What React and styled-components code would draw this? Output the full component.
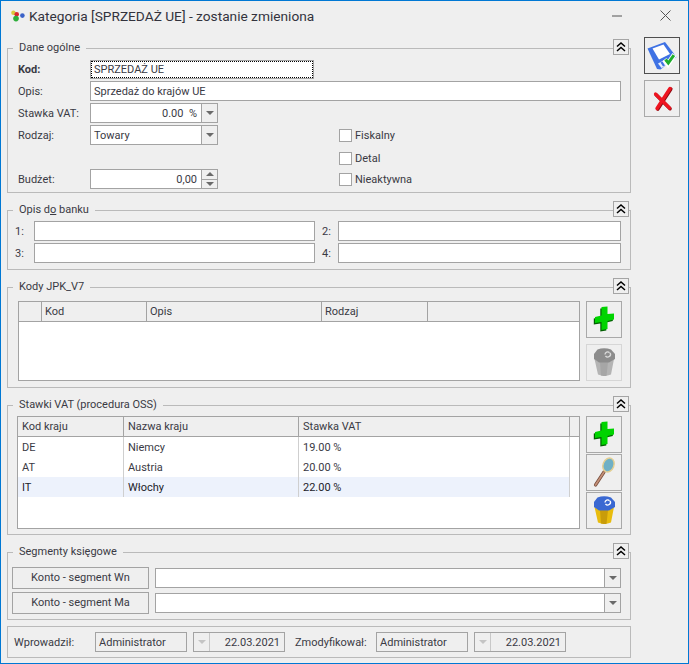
import React from 'react';
import styled, { createGlobalStyle } from 'styled-components';

const GlobalStyle = createGlobalStyle`
  html, body {
    margin: 0;
    padding: 0;
    background: #efefef;
  }
  * { box-sizing: border-box; }
`;

const Window = styled.div`
  width: 689px;
  height: 664px;
  border: 1px solid #0078d4;
  background: #efefef;
  color: #3a3a44;
  font-family: Roboto, "Open Sans", sans-serif;
  font-size: 11px;
  overflow: hidden;
`;

const TitleBar = styled.div`
  height: 36px;
  display: flex;
  align-items: center;
  padding-left: 9px;
  padding-right: 17px;
  padding-bottom: 7px;
`;

const Title = styled.div`
  margin-left: 4px;
  font-size: 13.7px;
  color: #33333d;
  flex: 1;
`;

const TitleButtons = styled.div`
  display: flex;
  align-items: center;
  gap: 38px;
`;

const Main = styled.div`
  display: flex;
  padding-left: 6px;
  gap: 13px;
`;

const LeftColumn = styled.div`
  width: 624px;
  padding-top: 11px;
  display: flex;
  flex-direction: column;
`;

const RightColumn = styled.div`
  width: 36px;
  display: flex;
  flex-direction: column;
  gap: 6px;
`;

const Section = styled.section`
  position: relative;
  border: 1px solid #bababa;
  margin-bottom: ${p => p.$gap ?? 17}px;
  padding: ${p => p.$pad};
`;

const Legend = styled.div`
  position: absolute;
  top: -9px;
  left: 5px;
  padding: 0 6px;
  line-height: 16px;
  background: #efefef;
`;

const Toggle = styled.div`
  position: absolute;
  top: -10px;
  right: 1px;
  width: 16px;
  height: 16px;
  border: 1px solid #a5a5a5;
  background: #efefef;
  display: flex;
  align-items: center;
  justify-content: center;
`;

const Row = styled.div`
  display: flex;
  align-items: center;
  margin-bottom: ${p => p.$mb ?? 2}px;
  height: ${p => p.$h ?? 20}px;
`;

const Label = styled.div`
  width: ${p => p.$w}px;
  flex: none;
  font-weight: ${p => (p.$bold ? 700 : 400)};
  white-space: nowrap;
`;

const Field = styled.div`
  flex: ${p => (p.$w ? 'none' : 1)};
  width: ${p => (p.$w ? `${p.$w}px` : 'auto')};
  height: ${p => p.$h ?? 20}px;
  border: 1px solid #a3a3a3;
  background: ${p => (p.$off ? '#efefef' : '#fff')};
  display: flex;
  align-items: center;
  line-height: 16px;
  white-space: nowrap;
  outline: ${p => (p.$focus ? '1px dotted #000' : 'none')};
  outline-offset: -2px;
`;

const FieldText = styled.div`
  flex: 1;
  padding: 1px 4px 0 3px;
  text-align: ${p => (p.$right ? 'right' : 'left')};
  white-space: pre;
`;

const Arrow = styled.div`
  flex: none;
  width: 16px;
  height: 100%;
  border-left: 1px solid ${p => (p.$off ? '#c8c8c8' : '#a3a3a3')};
  background: #efefef;
  display: flex;
  align-items: center;
  justify-content: center;
  order: ${p => (p.$first ? -1 : 0)};
  ${p => p.$first && `
    border-left: 0;
    border-right: 1px solid #c8c8c8;
  `}
  &::after {
    content: '';
    border-left: 4px solid transparent;
    border-right: 4px solid transparent;
    border-top: 4px solid ${p => (p.$off ? '#c4c4c4' : '#6a6a6a')};
  }
`;

const Spinner = styled.div`
  flex: none;
  width: 16px;
  height: 100%;
  border-left: 1px solid #a3a3a3;
  background: #efefef;
  display: flex;
  flex-direction: column;
`;

const SpinPart = styled.div`
  flex: 1;
  display: flex;
  align-items: center;
  justify-content: center;
  border-top: ${p => (p.$down ? '1px solid #a3a3a3' : '0')};
  &::after {
    content: '';
    border-left: 4px solid transparent;
    border-right: 4px solid transparent;
    ${p => (p.$down ? 'border-top' : 'border-bottom')}: 4px solid #6a6a6a;
  }
`;

const CheckWrap = styled.div`
  margin-left: ${p => p.$ml}px;
  display: flex;
  align-items: center;
  gap: 3px;
  position: relative;
  top: ${p => p.$shift ?? 0}px;
`;

const Box = styled.div`
  width: 13px;
  height: 13px;
  border: 1px solid #a3a3a3;
  background: #fff;
`;

const Spacer = styled.div`
  width: ${p => p.$w}px;
  flex: none;
`;

const GridArea = styled.div`
  display: flex;
  gap: 6px;
`;

const Grid = styled.div`
  width: ${p => p.$w}px;
  height: ${p => p.$h}px;
  flex: none;
  border: 1px solid #a3a3a3;
  background: #fff;
`;

const GridRow = styled.div`
  display: grid;
  grid-template-columns: ${p => p.$cols};
  height: 20px;
  ${p => p.$head && `
    background: #efefef;
    border-bottom: 1px solid #a3a3a3;
  `}
`;

const Cell = styled.div`
  padding-left: ${p => p.$pl ?? 4}px;
  line-height: ${p => (p.$head ? 20 : 22)}px;
  border-right: 1px solid ${p => (p.$head ? '#a3a3a3' : '#cfcfcf')};
  background: ${p => (p.$active ? '#edf2fc' : 'transparent')};
  color: ${p => (p.$active ? '#22222a' : 'inherit')};
  white-space: nowrap;
  overflow: hidden;
`;

const ToolColumn = styled.div`
  width: 36px;
  flex: none;
  display: flex;
  flex-direction: column;
  gap: ${p => p.$gap}px;
`;

const IconButton = styled.div`
  width: 36px;
  height: 37px;
  border: 1px solid ${p => (p.$dark ? '#4f4f4f' : p.$off ? '#d6d6d6' : '#a9a9a9')};
  background: #efefef;
  display: flex;
  align-items: center;
  justify-content: center;
  flex: none;
`;

const SegmentRow = styled.div`
  display: flex;
  align-items: center;
  gap: 6px;
  height: 22px;
  margin-bottom: ${p => p.$mb ?? 0}px;
`;

const SegmentButton = styled.div`
  width: 137px;
  height: 22px;
  flex: none;
  border: 1px solid #a3a3a3;
  background: #efefef;
  text-align: center;
  line-height: 19px;
`;

const Footer = styled.div`
  border: 1px solid #bababa;
  height: 32px;
  display: flex;
  align-items: center;
  padding-left: 6px;
`;

const SmallX = () => (
  <svg width="11" height="11" viewBox="0 0 11 11">
    <path d="M.5.5l10 10M10.5.5l-10 10" stroke="#555" strokeWidth="1" fill="none" />
  </svg>
);

const AppIcon = () => (
  <svg width="15" height="12" viewBox="0 0 15 12">
    <circle cx="3.4" cy="2.7" r="2.2" fill="#d9c93c" />
    <circle cx="6.7" cy="4.3" r="2.3" fill="#d8262c" />
    <circle cx="6" cy="8.6" r="2.8" fill="#2cae3a" />
    <circle cx="12.4" cy="5.6" r="2.3" fill="#3b62c8" />
  </svg>
);

const Chevrons = () => (
  <svg width="10" height="10" viewBox="0 0 10 10">
    <path d="M1 4.5L5 1l4 3.5M1 9l4-3.5L9 9" stroke="#000" strokeWidth="1.5" fill="none" />
  </svg>
);

const SaveIcon = () => (
  <svg width="34" height="35" viewBox="1 1 34 35">
    <path d="M3.500 11.500L21 5l11.500 15L16.500 32.500l-3.500-.5z" fill="#3f72e4" />
    <path d="M8.500 11.500L19.500 7.500l6.500 9.500-11 5.500z" fill="#fff" />
    <path d="M14 26.500l6.500-3.500 3.500 4.500-6.500 3.500z" fill="#e8eefc" />
    <path d="M16.500 25.500l2-1 2.500 4-2 1z" fill="#3f72e4" />
    <path d="M20.500 22.500l3.500 4.500 6.500-9.500" stroke="#fff" strokeWidth="5" fill="none" />
    <path d="M21.500 22.500l2.800 3.600 5.600-8" stroke="#1fae2c" strokeWidth="3" fill="none" />
  </svg>
);

const CancelIcon = () => (
  <svg width="34" height="35" viewBox="1 1 34 35">
    <path d="M11.500 14l14 14" stroke="#8e0a12" strokeWidth="3.400" strokeLinecap="round" transform="translate(.6 .8)" />
    <path d="M26 8.500L13 28.500" stroke="#8e0a12" strokeWidth="3.600" strokeLinecap="round" transform="translate(.8 .6)" />
    <path d="M11.500 14l14 14" stroke="#ee1420" strokeWidth="3.200" strokeLinecap="round" />
    <path d="M26 8.500L13 28.500" stroke="#ee1420" strokeWidth="3.400" strokeLinecap="round" />
  </svg>
);

const PlusIcon = () => (
  <svg width="34" height="35" viewBox="1 1 34 35">
    <path d="M15.500 6L21.500 5.500V13L28 12.500V18.500L21.500 20V28L15.500 29V21L9 22V16L15.500 14.500z" fill="#005f00" transform="translate(-1.200 1.500)" />
    <path d="M15.500 6L21.500 5.500V13L28 12.500V18.500L21.500 20V28L15.500 29V21L9 22V16L15.500 14.500z" fill="#00d400" />
  </svg>
);

const LensIcon = () => (
  <svg width="34" height="35" viewBox="1 1 34 35">
    <path d="M9.500 31L18 18" stroke="#7a5140" strokeWidth="3.200" strokeLinecap="round" />
    <path d="M9.500 31L18 18" stroke="#c49078" strokeWidth="1.600" strokeLinecap="round" />
    <ellipse cx="22.500" cy="11" rx="5.400" ry="7.200" transform="rotate(22 22.500 11)" fill="#6fb0c6" stroke="#e4cf92" strokeWidth="1.500" />
  </svg>
);

const TrashIcon = ({ $off }) => (
  <svg width="34" height="35" viewBox="1 1 34 35">
    <path d="M8.500 15L13 18H23L28 15L25 30.500Q18.500 33 12 30.500z" fill={$off ? '#b4b4b4' : '#e8bc0e'} />
    <path d="M14 18H22L20.500 32Q17.500 32 15 31.500z" fill={$off ? '#a6a6a6' : '#c89c0a'} />
    <path d="M11.500 5.500Q18 3 25 5.500L29 10V15L23 18.500H13L8 15V10z" fill={$off ? '#8c8c8c' : '#3a68d2'} />
    <path d="M19 10.500a2.600 2.600 0 0 1 4.500-1.800M24 8.800a2.600 2.600 0 0 1-4.500 3" fill="none" stroke={$off ? '#dcdcdc' : '#fff'} strokeWidth="1.300" />
  </svg>
);

function App() {
  return (
    <>
      <GlobalStyle />
      <Window>
        <TitleBar>
          <AppIcon />
          <Title>Kategoria [SPRZEDAŻ UE] - zostanie zmieniona</Title>
          <TitleButtons>
            <svg width="10" height="2" viewBox="0 0 10 2"><path d="M0 1h10" stroke="#555" /></svg>
            <SmallX />
          </TitleButtons>
        </TitleBar>

        <Main>
          <LeftColumn>
            <Section $pad="11px 9px 3px 10px">
              <Legend>Dane ogólne</Legend>
              <Toggle><Chevrons /></Toggle>
              <Row $h={19}>
                <Label $w={72} $bold>Kod:</Label>
                <Field $w={224} $h={19} $focus><FieldText>SPRZEDAŻ UE</FieldText></Field>
              </Row>
              <Row>
                <Label $w={72}>Opis:</Label>
                <Field><FieldText>Sprzedaż do krajów UE</FieldText></Field>
              </Row>
              <Row>
                <Label $w={72}>Stawka VAT:</Label>
                <Field $w={128}><FieldText $right>0.00  %</FieldText><Arrow /></Field>
              </Row>
              <Row>
                <Label $w={72}>Rodzaj:</Label>
                <Field $w={128}><FieldText>Towary</FieldText><Arrow /></Field>
                <CheckWrap $ml={121}><Box /><span>Fiskalny</span></CheckWrap>
              </Row>
              <Row>
                <Spacer $w={72} />
                <Spacer $w={128} />
                <CheckWrap $ml={121} $shift={1}><Box /><span>Detal</span></CheckWrap>
              </Row>
              <Row $mb={0}>
                <Label $w={72}>Budżet:</Label>
                <Field $w={128}>
                  <FieldText $right>0,00</FieldText>
                  <Spinner><SpinPart /><SpinPart $down /></Spinner>
                </Field>
                <CheckWrap $ml={121}><Box /><span>Nieaktywna</span></CheckWrap>
              </Row>
            </Section>

            <Section $pad="10px 9px 6px 7px">
              <Legend>Opis d<u>o</u> banku</Legend>
              <Toggle><Chevrons /></Toggle>
              <Row>
                <Label $w={19}>1:</Label>
                <Field $w={281} />
                <Spacer $w={7} />
                <Label $w={16}>2:</Label>
                <Field />
              </Row>
              <Row $mb={0}>
                <Label $w={19}>3:</Label>
                <Field $w={281} />
                <Spacer $w={7} />
                <Label $w={16}>4:</Label>
                <Field />
              </Row>
            </Section>

            <Section $pad="13px 8px 6px 10px">
              <Legend>Kody JPK_V7</Legend>
              <Toggle><Chevrons /></Toggle>
              <GridArea>
                <Grid $w={562} $h={80}>
                  <GridRow $head $cols="23px 105px 175px 106px 1fr">
                    <Cell $head />
                    <Cell $head $pl={3}>Kod</Cell>
                    <Cell $head $pl={3}>Opis</Cell>
                    <Cell $head $pl={3}>Rodzaj</Cell>
                    <div />
                  </GridRow>
                </Grid>
                <ToolColumn $gap={6}>
                  <IconButton><PlusIcon /></IconButton>
                  <IconButton $off><TrashIcon $off /></IconButton>
                </ToolColumn>
              </GridArea>
            </Section>

            <Section $pad="10px 8px 5px 9px">
              <Legend>Stawki VAT (procedura OSS)</Legend>
              <Toggle><Chevrons /></Toggle>
              <GridArea>
                <Grid $w={563} $h={113}>
                  <GridRow $head $cols="106px 175px 271px 1fr">
                    <Cell $head>Kod kraju</Cell>
                    <Cell $head>Nazwa kraju</Cell>
                    <Cell $head>Stawka VAT</Cell>
                    <div />
                  </GridRow>
                  <GridRow $cols="106px 175px 271px 1fr">
                    <Cell>DE</Cell><Cell>Niemcy</Cell><Cell>19.00 %</Cell><div />
                  </GridRow>
                  <GridRow $cols="106px 175px 271px 1fr">
                    <Cell>AT</Cell><Cell>Austria</Cell><Cell>20.00 %</Cell><div />
                  </GridRow>
                  <GridRow $cols="106px 175px 271px 1fr">
                    <Cell $active>IT</Cell><Cell $active>Włochy</Cell><Cell $active>22.00 %</Cell><div />
                  </GridRow>
                </Grid>
                <ToolColumn $gap={1}>
                  <IconButton><PlusIcon /></IconButton>
                  <IconButton><LensIcon /></IconButton>
                  <IconButton><TrashIcon /></IconButton>
                </ToolColumn>
              </GridArea>
            </Section>

            <Section $pad="14px 9px 5px 4px" $gap={6}>
              <Legend>Segmenty księgowe</Legend>
              <Toggle><Chevrons /></Toggle>
              <SegmentRow $mb={3}>
                <SegmentButton>Konto - segment Wn</SegmentButton>
                <Field><FieldText /><Arrow /></Field>
              </SegmentRow>
              <SegmentRow>
                <SegmentButton>Konto - segment Ma</SegmentButton>
                <Field><FieldText /><Arrow /></Field>
              </SegmentRow>
            </Section>

            <Footer>
              <Label $w={81}>Wprowadził:</Label>
              <Field $w={92} $off><FieldText>Administrator</FieldText></Field>
              <Spacer $w={6} />
              <Field $w={92} $off>
                <FieldText $right>22.03.2021</FieldText>
                <Arrow $off $first />
              </Field>
              <Spacer $w={10} />
              <Label $w={81}>Zmodyfikował:</Label>
              <Field $w={92} $off><FieldText>Administrator</FieldText></Field>
              <Spacer $w={6} />
              <Field $w={92} $off>
                <FieldText $right>22.03.2021</FieldText>
                <Arrow $off $first />
              </Field>
            </Footer>
          </LeftColumn>

          <RightColumn>
            <IconButton $dark><SaveIcon /></IconButton>
            <IconButton><CancelIcon /></IconButton>
          </RightColumn>
        </Main>
      </Window>
    </>
  );
}

export default App;
